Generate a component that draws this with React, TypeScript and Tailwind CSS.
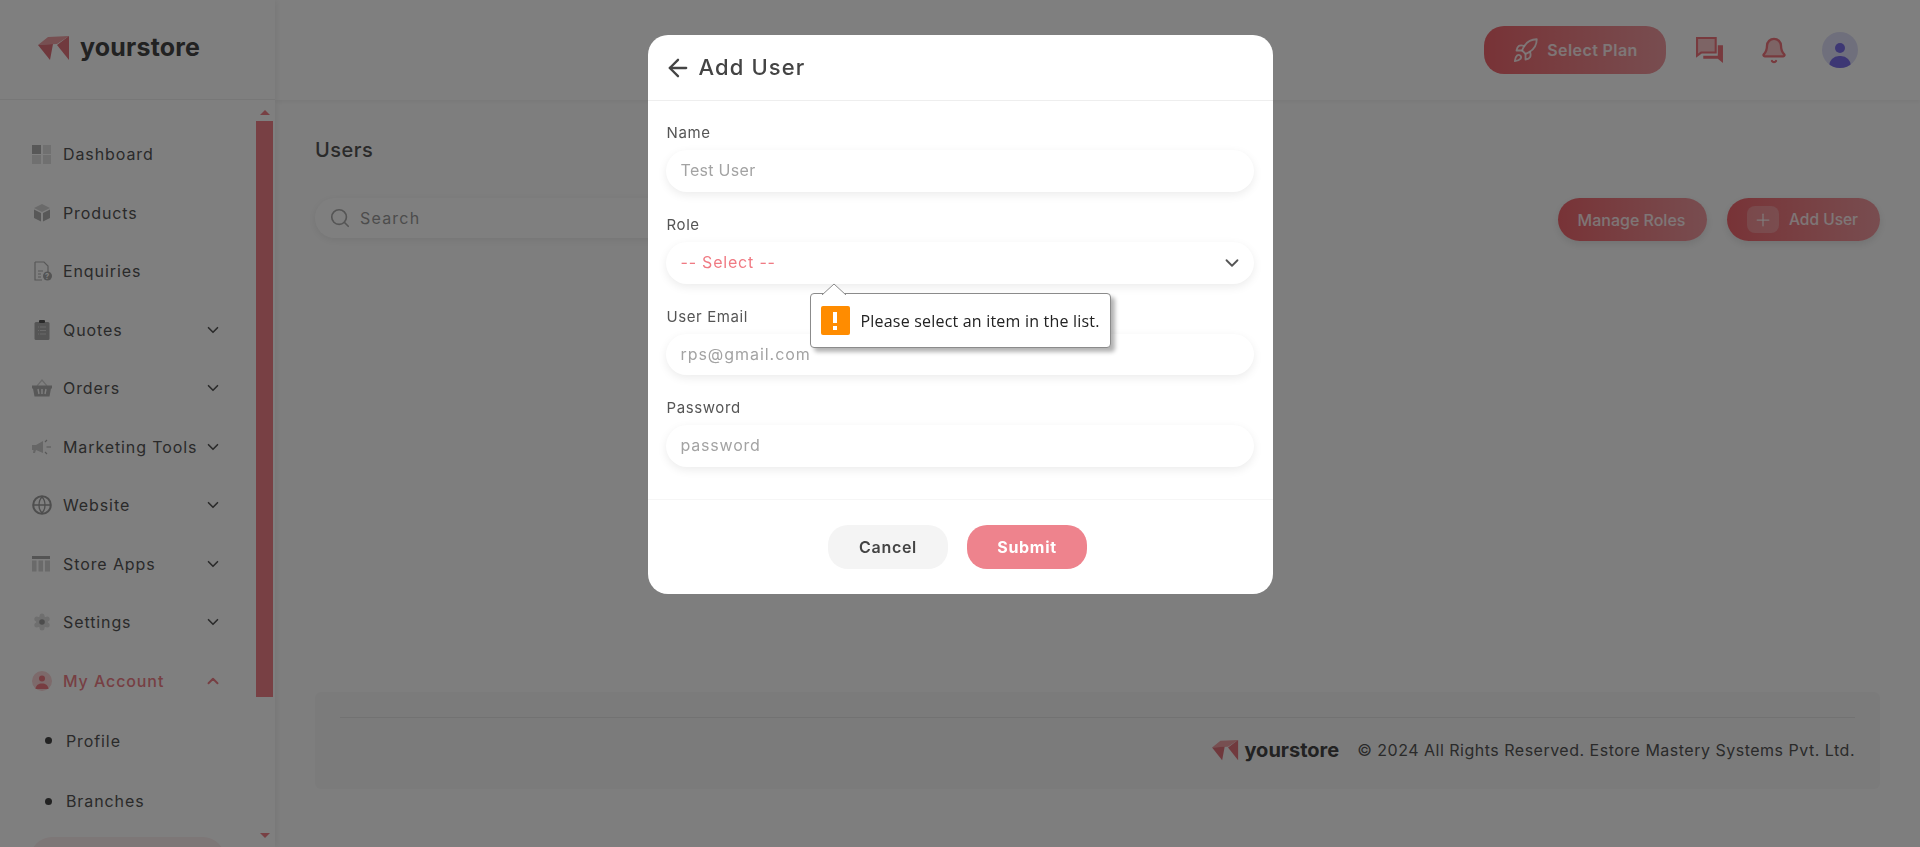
import { ArrowLeft, Bell, ChevronDown, ChevronUp, Plus, Rocket, Search } from "lucide-react";
import type { ReactNode } from "react";

function LogoMark({ className }: { className: string }) {
  return (
    <svg viewBox="0 0 32 25" className={className}>
      <polygon points="0,9 10,1 31,0 19,8" fill="#ee9ea2" />
      <polygon points="0,9 15,8 12,24" fill="#de7079" />
      <polygon points="19,9 31,0 31,24" fill="#e2747c" />
    </svg>
  );
}

const DashboardIcon = (
  <svg viewBox="0 0 20 20" className="w-5 h-5">
    <rect x="0" y="1" width="9" height="9" fill="#b0b0b0" />
    <rect x="11" y="1" width="8" height="9" fill="#e0e0e0" />
    <rect x="0" y="11" width="9" height="9" fill="#e0e0e0" />
    <rect x="11" y="11" width="8" height="9" fill="#e0e0e0" />
  </svg>
);

const ProductsIcon = (
  <svg viewBox="0 0 20 20" className="w-5 h-5">
    <polygon points="10,1 18,5 10,9 2,5" fill="#d4d4d4" />
    <polygon points="2,6.5 9,10 9,18.5 2,15" fill="#b0b0b0" />
    <polygon points="18,6.5 11,10 11,18.5 18,15" fill="#b0b0b0" />
  </svg>
);

const EnquiriesIcon = (
  <svg viewBox="0 0 20 20" className="w-5 h-5">
    <path d="M3 1h9l4 4v6M3 1v18h7" fill="none" stroke="#b0b0b0" strokeWidth="1.2" />
    <path d="M6 10h5M6 13h3M6 16h3" stroke="#b0b0b0" strokeWidth="1.2" />
    <circle cx="15.5" cy="15" r="4.5" fill="#a8a8a8" />
    <text x="15.5" y="18" fontSize="7.5" textAnchor="middle" fill="#fff" fontWeight="700" fontFamily="Inter, sans-serif">?</text>
  </svg>
);

const QuotesIcon = (
  <svg viewBox="0 0 20 20" className="w-5 h-5">
    <rect x="2.5" y="2" width="15" height="18" rx="1.5" fill="#aaaaaa" />
    <rect x="7" y="0" width="6" height="3" rx="1" fill="#555" />
    <path d="M6 7h8M6 10.5h8M6 14h8" stroke="#d4d4d4" strokeWidth="1" strokeDasharray="1 1 6 0" />
  </svg>
);

const OrdersIcon = (
  <svg viewBox="0 0 20 20" className="w-5 h-5">
    <path d="M5 8l5-6 5 6" fill="none" stroke="#d4d4d4" strokeWidth="1.2" />
    <path d="M0 7.5h20v3h-1l-1.5 8h-15l-1.500-8h-1z" fill="#b0b0b0" />
    <path d="M6 11l1 5M10 11v5M14 11l-1 5" stroke="#fff" strokeWidth="1.4" />
  </svg>
);

const MarketingIcon = (
  <svg viewBox="0 0 20 20" className="w-5 h-5">
    <path d="M0 8h4l7-4v12l-7-3-1 3h-2l.5-3h-1.500z" fill="#cccccc" />
    <path d="M13 5l2-2M14.500 10h4.500M13 15l2 2" stroke="#b0b0b0" strokeWidth="1.2" />
  </svg>
);

const WebsiteIcon = (
  <svg viewBox="0 0 20 20" className="w-5 h-5">
    <circle cx="10" cy="10" r="8.800" fill="none" stroke="#9c9c9c" strokeWidth="2" />
    <path d="M2 10h16M10 2c-4 4-4 12 0 16M10 2c4 4 4 12 0 16" fill="none" stroke="#9c9c9c" strokeWidth="1.300" />
  </svg>
);

const StoreAppsIcon = (
  <svg viewBox="0 0 20 20" className="w-5 h-5">
    <rect x="0" y="2" width="18" height="3" fill="#a8a8a8" />
    <rect x="0" y="6.500" width="4.500" height="11" fill="#d4d4d4" />
    <rect x="6.500" y="6.500" width="4.500" height="11" fill="#d4d4d4" />
    <rect x="13" y="6.500" width="5" height="11" fill="#d4d4d4" />
  </svg>
);

const SettingsIcon = (
  <svg viewBox="0 0 20 20" className="w-5 h-5">
    <g fill="#dedede">
      <circle cx="10" cy="10" r="6" />
      <circle cx="10" cy="4" r="2.500" />
      <circle cx="10" cy="16" r="2.500" />
      <circle cx="4.800" cy="7" r="2.500" />
      <circle cx="15.200" cy="7" r="2.500" />
      <circle cx="4.800" cy="13" r="2.500" />
      <circle cx="15.200" cy="13" r="2.500" />
    </g>
    <circle cx="10" cy="10" r="2.800" fill="#9a9a9a" />
  </svg>
);

const AccountIcon = (
  <svg viewBox="0 0 20 20" className="w-5 h-5">
    <circle cx="10" cy="10" r="10" fill="#fad4d6" />
    <circle cx="10" cy="7.500" r="3" fill="#ee7a82" />
    <path d="M3.500 18c.5-4 3-5.500 6.500-5.500s6 1.500 6.500 5.500z" fill="#ee7a82" />
  </svg>
);

type NavItem = { label: string; icon: ReactNode; caret?: boolean };

const navItems: NavItem[] = [
  { label: "Dashboard", icon: DashboardIcon },
  { label: "Products", icon: ProductsIcon },
  { label: "Enquiries", icon: EnquiriesIcon },
  { label: "Quotes", icon: QuotesIcon, caret: true },
  { label: "Orders", icon: OrdersIcon, caret: true },
  { label: "Marketing Tools", icon: MarketingIcon, caret: true },
  { label: "Website", icon: WebsiteIcon, caret: true },
  { label: "Store Apps", icon: StoreAppsIcon, caret: true },
  { label: "Settings", icon: SettingsIcon, caret: true },
];

function Sidebar() {
  return (
    <aside className="relative z-[1] w-[275px] h-full shrink-0 flex flex-col bg-white shadow-[2px_0_6px_rgba(0,0,0,0.06)]">
      <div className="h-[100px] shrink-0 flex items-center gap-[10px] pl-[38px] pb-[3px] border-b border-[#eeeeee]">
        <LogoMark className="w-[32px] h-[25px]" />
        <span className="text-[25px] font-bold text-[#444] tracking-[0.2px]">yourstore</span>
      </div>
      <div className="flex-1 flex min-h-0">
        <nav className="flex-1 pt-[25px] overflow-hidden text-[16px] text-[#555] tracking-[0.9px]">
          {navItems.map((item) => (
            <div key={item.label} className="h-[58.5px] flex items-center pl-[32px] pr-[34px]">
              <span className="w-[31px] shrink-0">{item.icon}</span>
              <span className="flex-1 whitespace-nowrap">{item.label}</span>
              {item.caret && <ChevronDown className="w-[18px] h-[18px] text-[#555]" strokeWidth={2.2} />}
            </div>
          ))}
          <div className="h-[58.5px] flex items-center pl-[32px] pr-[34px] text-[#ee7f87] font-medium">
            <span className="w-[31px] shrink-0">{AccountIcon}</span>
            <span className="flex-1">My Account</span>
            <ChevronUp className="w-[18px] h-[18px]" strokeWidth={2.6} />
          </div>
          <div className="h-[61px] flex items-center pl-[45px]">
            <span className="w-[7px] h-[7px] rounded-full bg-[#444] mr-[14px]"></span>
            Profile
          </div>
          <div className="h-[60px] flex items-center pl-[45px]">
            <span className="w-[7px] h-[7px] rounded-full bg-[#444] mr-[14px]"></span>
            Branches
          </div>
          <div className="h-[44px] mt-[6px] ml-[30px] mr-[31px] rounded-[22px] bg-[#fbeeef]"></div>
        </nav>
        <div className="w-[17px] mr-[2px] shrink-0 flex flex-col items-center">
          <div className="h-[21px] flex items-center pt-[3px]">
            <span className="w-0 h-0 border-x-[5px] border-x-transparent border-b-[5px] border-b-[#f08088]"></span>
          </div>
          <div className="w-full h-[576px] bg-[#f08088]"></div>
          <div className="flex-1 flex items-end pb-[9px]">
            <span className="w-0 h-0 border-x-[5px] border-x-transparent border-t-[5px] border-t-[#f08088]"></span>
          </div>
        </div>
      </div>
    </aside>
  );
}

function Header() {
  return (
    <header className="h-[100px] shrink-0 flex items-center justify-end pr-[62px] bg-white shadow-[0_2px_4px_rgba(0,0,0,0.05)]">
      <button className="w-[182px] h-[48px] rounded-[20px] bg-gradient-to-r from-[#f0666e] to-[#f09aa0] flex items-center justify-center gap-[8px] text-white/85 text-[16px] font-semibold tracking-[0.4px]">
        <Rocket className="w-[27px] h-[27px]" strokeWidth={1.6} />
        Select Plan
      </button>
      <svg viewBox="0 0 27 26" className="w-[28px] h-[27px] ml-[30px]">
        <path d="M1 1h18v14H5l-4 3z" fill="#fbc8cb" stroke="#f0757d" strokeWidth="2" />
        <path d="M21 8h5v17l-5-4H7v-3h14z" fill="#f0757d" />
      </svg>
      <Bell className="w-[28px] h-[31px] ml-[36px] text-[#f0757d]" fill="#fbc8cb" strokeWidth={2} />
      <div className="w-[36px] h-[36px] rounded-full bg-[#dfdff8] overflow-hidden ml-[34px] relative">
        <span className="absolute left-[13px] top-[11px] w-[10px] h-[10px] rounded-full bg-[#7a6fe8]"></span>
        <span className="absolute left-[7px] top-[24px] w-[22px] h-[20px] rounded-full bg-[#7a6fe8]"></span>
      </div>
    </header>
  );
}

function Footer() {
  return (
    <footer className="h-[97px] rounded-[6px] bg-[#f7f7f7] pl-[25px] pr-[25px] pt-[25px]">
      <div className="border-t border-[#e4e4e4] flex items-center justify-end gap-[18px] pt-[17px]">
        <div className="flex items-center gap-[5px]">
          <LogoMark className="w-[27px] h-[21px]" />
          <span className="text-[20px] font-bold text-[#444]">yourstore</span>
        </div>
        <span className="text-[16px] text-[#555] tracking-[0.5px]">© 2024 All Rights Reserved. Estore Mastery Systems Pvt. Ltd.</span>
      </div>
    </footer>
  );
}

function Field({ label, children }: { label: string; children: ReactNode }) {
  return (
    <div className="relative mb-[21px]">
      <label className="block h-[24px] leading-[24px] mb-[5px] ml-px text-[15px] text-[#555] tracking-[0.6px]">{label}</label>
      {children}
    </div>
  );
}

const inputClass =
  "w-full rounded-[21px] bg-white pl-[15px] pb-[2px] text-[16px] outline-none shadow-[0_3px_10px_rgba(0,0,0,0.08)] placeholder:text-[#a3a3a3]";

function AddUserModal() {
  return (
    <div className="fixed z-10 inset-0 bg-black/50 flex justify-center items-start pt-[35px]">
      <div className="w-[625px] h-[559px] rounded-[20px] bg-white flex flex-col">
        <div className="h-[66px] shrink-0 flex items-center gap-[7px] pl-[16px] border-b border-[#eeeeee]">
          <ArrowLeft className="w-[28px] h-[28px] text-[#444]" strokeWidth={2} />
          <h2 className="text-[22px] text-[#444] tracking-[1.1px] font-medium">Add User</h2>
        </div>
        <div className="h-[399px] shrink-0 pt-[20px] pl-[18px] pr-[19px] border-b border-[#f6f6f6]">
          <Field label="Name">
            <input className={inputClass + " h-[42px] tracking-[0.3px]"} placeholder="Test User" readOnly />
          </Field>
          <Field label="Role">
            <div className="w-full h-[42px] rounded-[21px] bg-white pl-[15px] pr-[11px] flex items-center justify-between text-[16px] text-[#f07a83] shadow-[0_3px_10px_rgba(0,0,0,0.08)]">
              <span className="pb-[3px] tracking-[0.8px]">-- Select --</span>
              <ChevronDown className="w-[22px] h-[22px] text-[#555]" strokeWidth={2} />
            </div>
            <div className="absolute z-10 left-[144px] top-[80px] w-[301px] h-[55px] rounded-[4px] bg-white border border-[#8b8b8b] shadow-[4px_4px_4px_rgba(0,0,0,0.3)] flex items-center pl-[10px] gap-[11px]">
              <svg viewBox="0 0 24 12" className="absolute left-[11px] top-[-11px] w-[24px] h-[12px]">
                <polyline points="0,12 12,1 24,12" fill="#fff" stroke="#8b8b8b" strokeWidth="1" />
              </svg>
              <span className="w-[29px] h-[29px] rounded-[2px] bg-[#ff8c00] flex items-center justify-center">
                <svg viewBox="0 0 6 18" className="w-[6px] h-[18px]">
                  <rect x="1" y="0" width="4" height="11" fill="#fff" />
                  <rect x="1" y="14" width="4" height="4" fill="#fff" />
                </svg>
              </span>
              <span className="font-['Open_Sans',sans-serif] text-[16px] tracking-[0.2px] text-[#222] whitespace-nowrap">Please select an item in the list.</span>
            </div>
          </Field>
          <Field label="User Email">
            <input className={inputClass + " h-[41px] tracking-[0.95px]"} placeholder="rps@gmail.com" readOnly />
          </Field>
          <Field label="Password">
            <input className={inputClass + " h-[42px] tracking-[0.8px]"} placeholder="password" readOnly />
          </Field>
        </div>
        <div className="flex-1 flex justify-center gap-[19px] pt-[25px] pr-[5px]">
          <button className="w-[120px] h-[44px] rounded-[20px] bg-[#f4f4f4] text-[16px] font-semibold tracking-[0.7px] text-[#444]">Cancel</button>
          <button className="w-[120px] h-[44px] rounded-[20px] bg-[#ee838d] text-[16px] font-bold tracking-[0.7px] text-white">Submit</button>
        </div>
      </div>
    </div>
  );
}

export default function App() {
  return (
    <div className="h-[847px] flex overflow-hidden bg-white font-['Inter',sans-serif]">
      <Sidebar />
      <main className="flex-1 flex flex-col min-w-0 bg-[#fdfdfd]">
        <Header />
        <div className="flex-1 flex flex-col pl-[40px] pr-[40px] pb-[58px]">
          <h1 className="mt-[36px] h-[28px] leading-[28px] text-[20px] font-medium text-[#555] tracking-[0.5px]">Users</h1>
          <div className="mt-[34px] flex items-start justify-between">
            <div className="w-[520px] h-[40px] rounded-[20px] bg-white shadow-[0_2px_8px_rgba(0,0,0,0.08)] flex items-center gap-[9px] pl-[14px] text-[16px] text-[#999] tracking-[1.2px]">
              <Search className="w-[22px] h-[22px] text-[#aaa]" strokeWidth={1.8} />
              Search
            </div>
            <div className="flex items-center gap-[20px]">
              <button className="w-[149px] h-[43px] pr-[2px] rounded-[22px] bg-gradient-to-r from-[#f0666e] to-[#f09aa0] text-white/85 text-[16px] font-medium shadow-[0_3px_8px_rgba(0,0,0,0.1)]">Manage Roles</button>
              <button className="w-[153px] h-[43px] rounded-[22px] bg-gradient-to-r from-[#f0666e] to-[#f09aa0] text-white/85 text-[15.5px] font-medium shadow-[0_3px_8px_rgba(0,0,0,0.1)] flex items-center pl-[20px] gap-[10px]">
                <span className="w-[32px] h-[27px] rounded-[8px] bg-white/25 flex items-center justify-center">
                  <Plus className="w-[20px] h-[20px]" strokeWidth={1.5} />
                </span>
                Add User
              </button>
            </div>
          </div>
          <div className="flex-1"></div>
          <Footer />
        </div>
      </main>
      <AddUserModal />
    </div>
  );
}
